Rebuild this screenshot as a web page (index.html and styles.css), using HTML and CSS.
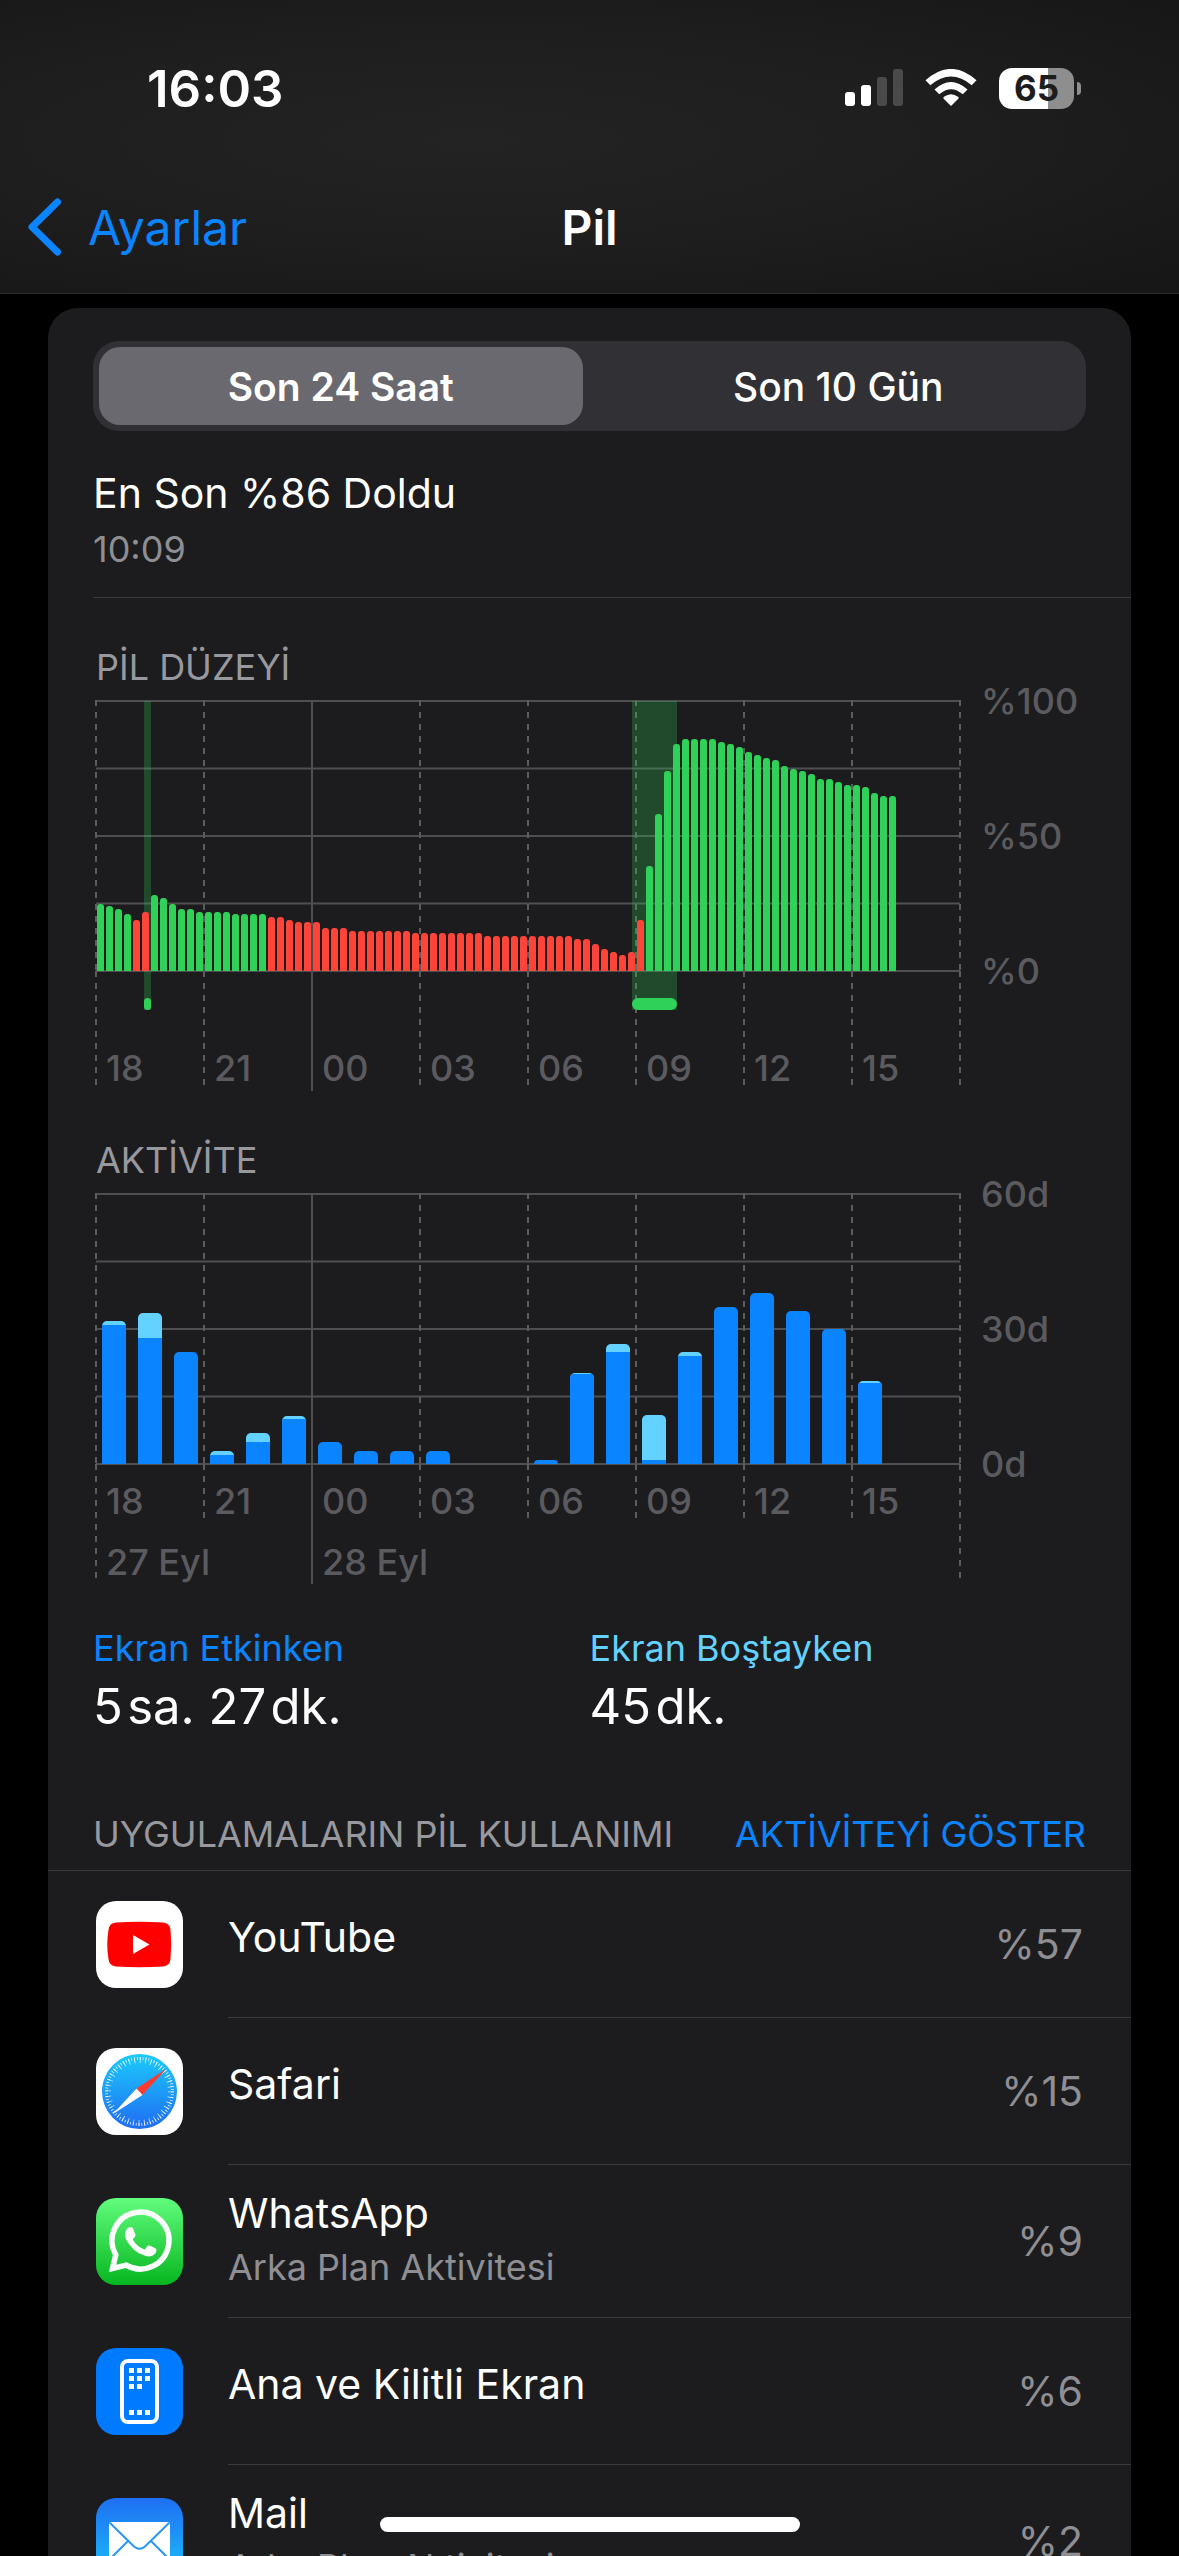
FILE: index.html
```
<!DOCTYPE html>
<html lang="tr">
<head>
    <meta charset="UTF-8">
    <meta name="viewport" content="width=device-width, initial-scale=1.0">
    <title>Pil</title>
    <link rel="stylesheet" href="styles.css">
</head>
<body>
    <header class="header">
        <div class="status">
            <span class="time">16:03</span>
            <div class="status-icons">
                <svg width="58" height="38" viewBox="0 0 58 38" fill="#fff">
                    <rect x="0" y="23" width="10" height="14" rx="3"/>
                    <rect x="16" y="16" width="10" height="21" rx="3"/>
                    <rect x="32" y="8" width="10" height="29" rx="3" fill="#4a4a4a"/>
                    <rect x="48" y="0" width="10" height="37" rx="3" fill="#4a4a4a"/>
                </svg>
                <svg width="52" height="38" viewBox="0 0 52 38" fill="#fff">
                    <path d="M26 37 L18.500 29.500 Q18 28.500 19 27.800 Q26 22.500 33 27.800 Q34 28.500 33.500 29.500 Z"/>
                    <path d="M9.500 20.500 Q26 5.500 42.500 20.500 L37.800 25.300 Q26 15 14.200 25.300 Z"/>
                    <path d="M0.500 11.300 Q26 -11.500 51.500 11.300 L46.700 16.200 Q26 -1 5.300 16.200 Z"/>
                </svg>
                <div class="battery"><span class="battery-body">65</span><span class="battery-tip"></span></div>
            </div>
        </div>
        <nav class="nav">
            <a href="#" class="back">
                <svg width="35" height="58" viewBox="0 0 35 58"><path d="M30.500 4 L5 29 L30.500 54" fill="none" stroke="#0a84ff" stroke-width="7" stroke-linecap="round" stroke-linejoin="round"/></svg>
                Ayarlar
            </a>
            <h1>Pil</h1>
        </nav>
    </header>

    <main class="card">
        <div class="segmented">
            <button type="button" class="selected">Son 24 Saat</button>
            <button type="button">Son 10 Gün</button>
        </div>

        <section class="last-charge">
            <p class="title">En Son %86 Doldu</p>
            <p class="sub">10:09</p>
        </section>

        <section class="chart">
            <h2>PİL DÜZEYİ</h2>
            <div class="chart-row">
                <div class="plot" id="levelPlot">
                    <div class="lines"></div>
                    <div class="ticks tall"></div>
                    <div class="charging"></div>
                    <div class="bars level"></div>
                </div>
                <div class="scale"><span>%100</span><span>%50</span><span>%0</span></div>
            </div>
        </section>

        <section class="chart">
            <h2>AKTİVİTE</h2>
            <div class="chart-row">
                <div class="plot" id="activityPlot">
                    <div class="lines"></div>
                    <div class="ticks"></div>
                    <div class="bars activity"></div>
                </div>
                <div class="scale"><span>60d</span><span>30d</span><span>0d</span></div>
            </div>
        </section>

        <section class="totals">
            <div>
                <p class="label on">Ekran Etkinken</p>
                <p class="value">5&#8202;sa. 27&#8202;dk.</p>
            </div>
            <div>
                <p class="label idle">Ekran Boştayken</p>
                <p class="value">45&#8202;dk.</p>
            </div>
        </section>

        <div class="list-header">
            <h2>UYGULAMALARIN PİL KULLANIMI</h2>
            <a href="#">AKTİVİTEYİ GÖSTER</a>
        </div>

        <ul class="apps">
            <li>
                <svg class="icon" viewBox="0 0 87 87">
                    <rect width="87" height="87" rx="20" fill="#fff"/>
                    <path d="M20 21.500 Q43 20 67 21.500 Q74 22 74.500 29 Q76 43 74.500 58 Q74 65 67 65.500 Q43 67 20 65.500 Q13 65 12.500 58 Q10 43 12.500 29 Q13 22 20 21.500Z" fill="#f00"/>
                    <path d="M37 34 L53.500 43.500 L37 53Z" fill="#fff"/>
                </svg>
                <div class="row"><div class="name">YouTube</div><span class="percent">%57</span></div>
            </li>
            <li>
                <svg class="icon" viewBox="0 0 87 87">
                    <defs><linearGradient id="safari" x1="0" y1="0" x2="0" y2="1"><stop offset="0" stop-color="#1bcbfb"/><stop offset="1" stop-color="#1f6cf3"/></linearGradient></defs>
                    <rect width="87" height="87" rx="20" fill="#fff"/>
                    <circle cx="43.500" cy="43.500" r="37.500" fill="url(#safari)"/>
                    <circle cx="43.500" cy="43.500" r="33" fill="none" stroke="#fff" stroke-width="3" stroke-dasharray="0.800 2.080" opacity=".85"/>
                    <circle cx="43.500" cy="43.500" r="31.500" fill="none" stroke="#fff" stroke-width="6" stroke-dasharray="0.800 4.700" opacity=".8"/>
                    <path d="M70 21 L40.500 40.500 L46.500 47Z" fill="#ff3b30"/>
                    <path d="M17 66 L40.500 40.500 L46.500 47Z" fill="#fff"/>
                </svg>
                <div class="row"><div class="name">Safari</div><span class="percent">%15</span></div>
            </li>
            <li>
                <svg class="icon" viewBox="0 0 87 87">
                    <defs><linearGradient id="wa" x1="0" y1="0" x2="0" y2="1"><stop offset="0" stop-color="#61fd7d"/><stop offset="1" stop-color="#06b61f"/></linearGradient></defs>
                    <rect width="87" height="87" rx="20" fill="url(#wa)"/>
                    <path d="M19.800 56.800 A28.500 28.500 0 1 1 30.200 67.200 L16.500 70.500 Z" fill="none" stroke="#fcfcfc" stroke-width="5.500"/>
                    <path transform="translate(13.400 12.600) scale(2.600)" fill="#fcfcfc" d="M17.472 14.382c-.297-.149-1.758-.867-2.03-.967-.273-.099-.471-.148-.67.15-.197.297-.767.966-.94 1.164-.173.199-.347.223-.644.075-.297-.15-1.255-.463-2.39-1.475-.883-.788-1.48-1.761-1.653-2.059-.173-.297-.018-.458.13-.606.134-.133.298-.347.446-.52.149-.174.198-.298.298-.497.099-.198.05-.371-.025-.52-.075-.149-.669-1.612-.916-2.207-.242-.579-.487-.5-.669-.51-.173-.008-.371-.01-.57-.01-.198 0-.52.074-.792.372-.272.297-1.04 1.016-1.04 2.479 0 1.462 1.065 2.875 1.213 3.074.149.198 2.096 3.2 5.077 4.487.709.306 1.262.489 1.694.625.712.227 1.36.195 1.871.118.571-.085 1.758-.719 2.006-1.413.248-.694.248-1.289.173-1.413-.074-.124-.272-.198-.57-.347"/>
                </svg>
                <div class="row two-lines"><div class="name">WhatsApp<small>Arka Plan Aktivitesi</small></div><span class="percent">%9</span></div>
            </li>
            <li>
                <svg class="icon" viewBox="0 0 87 87">
                    <rect width="87" height="87" rx="20" fill="#007aff"/>
                    <rect x="26" y="13" width="35" height="61" rx="6" fill="none" stroke="#fff" stroke-width="4"/>
                    <path fill="#fff" d="M33 20h5v5h-5zM41 20h5v5h-5zM49 20h5v5h-5zM33 28h5v5h-5zM41 28h5v5h-5zM49 28h5v5h-5zM33 36h5v5h-5zM41 36h5v5h-5zM33 62h5v5h-5zM41 62h5v5h-5zM49 62h5v5h-5z"/>
                </svg>
                <div class="row"><div class="name">Ana ve Kilitli Ekran</div><span class="percent">%6</span></div>
            </li>
            <li>
                <svg class="icon" viewBox="0 0 87 87">
                    <defs><linearGradient id="mail" x1="0" y1="0" x2="0" y2="1"><stop offset="0" stop-color="#1e6ff2"/><stop offset="1" stop-color="#1bc8fc"/></linearGradient></defs>
                    <rect width="87" height="87" rx="20" fill="url(#mail)"/>
                    <rect x="13" y="24" width="61" height="39" rx="3" fill="#fff"/>
                    <path d="M14 25 L38 48.500 Q43.500 53 49 48.500 L73 25 M32 43 L14 61 M55 43 L73 61" fill="none" stroke="#2b95f5" stroke-width="2"/>
                </svg>
                <div class="row two-lines"><div class="name">Mail<small>Arka Plan Aktivitesi</small></div><span class="percent">%2</span></div>
            </li>
        </ul>
    </main>

    <div class="home-indicator"></div>

    <script>
        // one value per 15 minutes
        const levels = [
            25, 24, 23, 21, 19, 22, 28, 27, 25, 23, 23, 22, 22, 22, 22, 21, 21, 21, 21,
            20, 20, 19, 18, 18, 18, 16, 16, 16, 15, 15, 15, 15, 15, 15, 15,
            14, 14, 14, 14, 14, 14, 14, 14, 13, 13, 13, 13, 13, 13, 13, 13, 13, 13,
            12, 12, 10, 8, 7, 6, 7, 19,
            39, 58, 74, 84, 86, 86, 86, 86, 85, 84, 83, 81, 80, 79, 78, 76, 75, 74, 73,
            71, 71, 70, 69, 69, 68, 66, 65, 65
        ];
        const lowRanges = [[4, 5], [19, 60]];
        // charging periods, in percent of the day: start, length
        const charging = [[5.5, 0.9], [62, 5.3]];
        // one pair per hour: total minutes, minutes with screen on
        const activity = [
            [31.7, 31], [33.5, 28], [25, 25], [3, 2], [7, 5], [10.7, 10], [5, 5], [3, 3], [3, 3], [3, 3],
            [0, 0], [0, 0], [1, 1], [20.2, 20], [26.7, 25], [11, 1], [25, 24], [35, 35], [38, 38],
            [34, 34], [30, 30], [18.5, 18]
        ];
        const hours = ["18", "21", "00", "03", "06", "09", "12", "15", ""];
        const dates = { "18": "27 Eyl", "00": "28 Eyl" };

        function drawTicks(plot, withDates) {
            const ticks = plot.querySelector(".ticks");
            for (const hour of hours) {
                const tick = document.createElement("div");
                tick.className = "tick";
                if (hour === "00") tick.classList.add("midnight");
                const foot = document.createElement("div");
                foot.className = "tick-foot";
                foot.innerHTML = "<span>" + hour + "</span>";
                if (withDates && (dates[hour] || hour === "")) {
                    foot.innerHTML += "<span class='date'>" + (dates[hour] || "") + "</span>";
                }
                const line = document.createElement("div");
                line.className = "tick-line";
                tick.append(line, foot);
                ticks.appendChild(tick);
            }
        }

        function drawLevels(plot) {
            const bars = plot.querySelector(".bars");
            levels.forEach((value, i) => {
                const bar = document.createElement("i");
                if (lowRanges.some(([from, to]) => i >= from && i <= to)) bar.className = "low";
                bar.style.height = value + "%";
                bars.appendChild(bar);
            });
            for (const [start, length] of charging) {
                const band = document.createElement("i");
                band.style.left = start + "%";
                band.style.width = length + "%";
                plot.querySelector(".charging").appendChild(band);
            }
        }

        function drawActivity(plot) {
            const bars = plot.querySelector(".bars");
            for (const [total, active] of activity) {
                const bar = document.createElement("i");
                bar.style.height = total / 60 * 100 + "%";
                const on = document.createElement("b");
                on.style.height = total ? active / total * 100 + "%" : "0";
                bar.appendChild(on);
                bars.appendChild(bar);
            }
        }

        const levelPlot = document.getElementById("levelPlot");
        const activityPlot = document.getElementById("activityPlot");
        drawTicks(levelPlot, false);
        drawLevels(levelPlot);
        drawTicks(activityPlot, true);
        drawActivity(activityPlot);
    </script>
</body>
</html>
```
FILE: styles.css
```
* { box-sizing: border-box; }

body {
    margin: 0;
    height: 100vh;
    overflow: hidden;
    display: flex;
    flex-direction: column;
    background: #000;
    color: #fff;
    font-family: Inter, "Liberation Sans", sans-serif;
    font-size: 41px;
}
h1, h2, p, ul { margin: 0; padding: 0; font-weight: 400; }
a { color: #0a84ff; text-decoration: none; }
button { font: inherit; color: inherit; border: none; background: none; }
svg { display: block; flex: none; }

/* Header */
.header {
    flex: none;
    padding-bottom: 15px;
    border-bottom: 1px solid #2c2c2e;
    background: radial-gradient(ellipse at 40% 48%, #232323 0%, #1e1e1e 50%, #161616 100%);
}
.status {
    height: 176px;
    padding: 0 98px 0 147px;
    display: flex;
    align-items: center;
    justify-content: space-between;
}
.time { font-size: 51px; font-weight: 600; }
.status-icons { display: flex; align-items: center; gap: 22px; }
.battery { display: flex; align-items: center; gap: 3px; }
.battery-body {
    width: 75px;
    height: 41px;
    line-height: 41px;
    border-radius: 13px;
    text-align: center;
    font-size: 35px;
    font-weight: 700;
    color: #1c1c1c;
    background: linear-gradient(90deg, #fff 65%, #8e8e8e 65%);
}
.battery-tip { width: 4px; height: 13px; border-radius: 0 4px 4px 0; background: #8e8e8e; }
.nav {
    height: 102px;
    display: grid;
    grid-template-columns: 1fr auto 1fr;
    align-items: center;
    font-size: 48px;
}
.nav h1 { font-size: 48px; font-weight: 600; }
.back { display: flex; align-items: center; gap: 26px; padding-left: 27px; }

/* Card */
.card {
    flex: 1;
    min-height: 0;
    overflow-y: auto;
    scrollbar-width: none;
    margin: 14px 48px 0;
    background: #1c1c1e;
    border-radius: 30px 30px 0 0;
}
.segmented {
    display: flex;
    gap: 14px;
    height: 90px;
    margin: 33px 45px 0;
    padding: 6px;
    border-radius: 26px;
    background: #313135;
}
.segmented button { flex: 1; border-radius: 21px; font-size: 39px; font-weight: 500; }
.segmented .selected { background: #6a696f; font-weight: 600; }

.last-charge {
    margin: 34px 0 0 45px;
    padding-bottom: 20px;
    line-height: 56px;
    border-bottom: 1px solid #3a3a3c;
}
.last-charge .sub { font-size: 36px; color: #8e8e93; }

/* Charts */
.chart { margin: 46px 0 0 48px; }
.chart h2 { font-size: 36px; line-height: 46px; margin-bottom: 10px; color: #98989f; }
.chart-row { display: flex; }
.plot { flex: 1; height: 391px; display: grid; position: relative; }
.plot > div { grid-area: 1 / 1; }
.lines {
    height: 272px;
    border-bottom: 2px solid #4f4f52;
    background: linear-gradient(#4f4f52 2px, transparent 2px) 0 0 / 100% 25%;
}
.ticks { display: grid; grid-template-columns: repeat(8, 1fr) 0; margin: 0 1px 0 -1px; }
.tick { min-width: 2px; white-space: nowrap; }
.tick-line, .tick-foot {
    background: repeating-linear-gradient(#5c5c5f 0 6px, transparent 6px 12px) 0 0 / 2px 100% no-repeat;
}
.tick-line { height: 271px; }
.tick-foot { display: flex; flex-direction: column; width: max-content; padding-left: 11px; }
.tick:last-child .tick-foot { padding-left: 2px; }
.tick-foot span { height: 54px; padding-top: 20px; line-height: 34px; font-size: 36px; font-weight: 500; color: #5b5b5f; }
.tick-foot .date { height: 60px; padding-top: 27px; }
.tall .tick-foot span { height: 114px; padding-top: 80px; }
.midnight .tick-line, .midnight .tick-foot { background-image: linear-gradient(#4f4f52, #4f4f52); }
.midnight .tick-foot { padding-bottom: 6px; }

.charging { position: relative; height: 310px; }
.charging i { position: absolute; top: 1px; bottom: 0; background: rgba(48, 209, 88, .25); }
.charging i::after {
    content: "";
    position: absolute;
    left: 0;
    right: 0;
    bottom: 0;
    height: 12px;
    border-radius: 6px;
    background: #30d158;
}

/* bars stay above the charging bands */
.bars { position: relative; height: 270px; margin-top: 1px; display: grid; align-items: end; }
.level { grid-template-columns: repeat(96, 1fr); }
.level i { margin: 0 1px; border-radius: 3px 3px 0 0; background: #30d158; }
.level .low { background: #ff453a; }
.activity { grid-template-columns: repeat(24, 1fr); }
.activity i {
    display: flex;
    align-items: flex-end;
    margin: 0 6px;
    border-radius: 5px 5px 0 0;
    overflow: hidden;
    background: #64d2ff;
}
.activity b { width: 100%; background: #0a84ff; }

.scale {
    width: 171px;
    height: 312px;
    margin-top: -20px;
    padding-left: 21px;
    display: flex;
    flex-direction: column;
    justify-content: space-between;
    font-size: 36px;
    line-height: 42px;
    font-weight: 500;
    color: #5b5b5f;
}

/* Totals */
.totals { display: grid; grid-template-columns: 1fr 1fr; margin: 41px 45px 0; }
.totals .label { font-size: 36px; line-height: 46px; }
.totals .value { font-size: 49px; line-height: 72px; }
.on { color: #0a84ff; }
.idle { color: #64d2ff; }

/* App list */
.list-header {
    display: flex;
    justify-content: space-between;
    margin-top: 68px;
    padding: 0 45px 13px;
    font-size: 36px;
    line-height: 46px;
    border-bottom: 1px solid #3a3a3c;
}
.list-header h2 { font-size: 36px; color: #98989f; }
.apps { list-style: none; }
.apps li { display: flex; align-items: center; padding-left: 48px; }
.icon { width: 87px; height: 87px; }
.row {
    flex: 1;
    display: flex;
    align-items: center;
    justify-content: space-between;
    height: 147px;
    margin-left: 45px;
    padding-right: 48px;
    border-bottom: 1px solid #3a3a3c;
}
.two-lines { height: 153px; }
.name { line-height: 56px; padding-bottom: 14px; }
.two-lines .name { padding-bottom: 4px; }
.name small { display: block; font-size: 36px; line-height: 52px; color: #8e8e93; }
.percent { color: #8e8e93; }

.home-indicator {
    position: fixed;
    left: 50%;
    bottom: 24px;
    width: 420px;
    height: 15px;
    margin-left: -210px;
    border-radius: 8px;
    background: #fff;
}
```
